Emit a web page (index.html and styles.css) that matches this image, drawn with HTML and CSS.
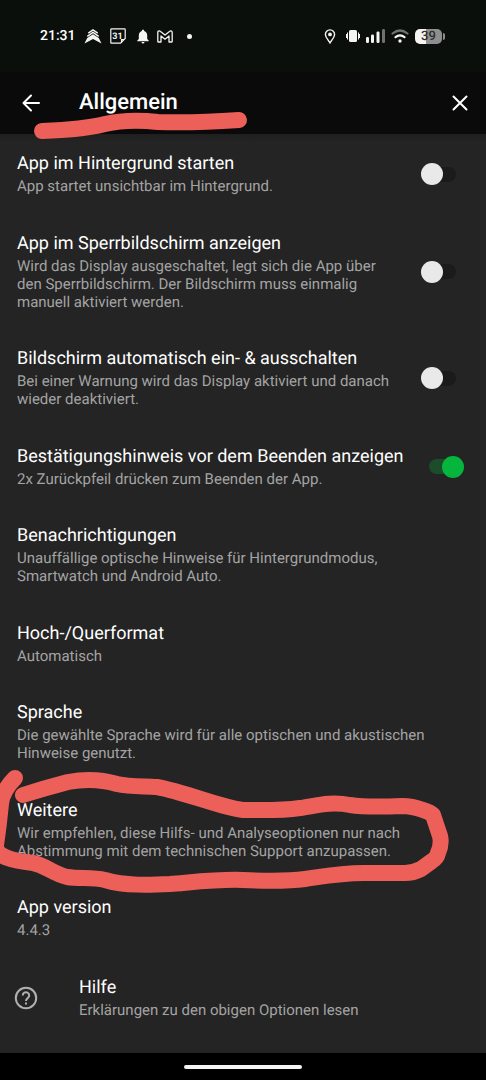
FILE: index.html
```html
<!DOCTYPE html>
<html lang="de">
<head>
<meta charset="utf-8">
<meta name="viewport" content="width=device-width, initial-scale=1">
<title>Allgemein</title>
<link rel="stylesheet" href="styles.css">
</head>
<body>
<div class="screen">
  <div class="status">
    <div class="status-left">
      <span class="clock">21:31</span>
      <svg width="18" height="16" viewBox="0 0 18 16" fill="#f4f4f4"><path d="M9 6.300L14.800 10L17.500 15.500L9 11L.5 15.500L3.200 10Z"/><path d="M3.300 8.300L9 4.500L14.700 8.300M4.300 5.200L9 1.900L13.700 5.200" fill="none" stroke="#f4f4f4" stroke-width="1.500"/></svg>
      <svg width="16" height="16" viewBox="0 0 16 16"><path d="M1.500 .8H14.500Q15.200 .8 15.200 1.500V10.500L10.500 15.200H1.500Q.8 15.200 .8 14.500V1.500Q.8 .8 1.500 .8ZM15 11.500H11.500V15" fill="none" stroke="#f4f4f4" stroke-width="1.200"/><text x="7.500" y="11" class="cal-day">31</text></svg>
      <svg class="bell" width="12" height="15" viewBox="0 0 12 15" fill="#f4f4f4"><path d="M6 .5Q7.200 .5 7.200 2Q10.200 3 10.200 6.500V10L11.700 11.500V12.300H.3V11.500L1.800 10V6.500Q1.800 3 4.800 2Q4.800 .5 6 .5ZM4.500 13H7.500Q7.300 14.500 6 14.500Q4.700 14.500 4.500 13Z"/></svg>
      <svg width="16" height="13" viewBox="0 0 16 13" fill="none" stroke="#f4f4f4" stroke-width="1.300" stroke-linejoin="round"><path d="M.8 11.500V2.500Q.8 .8 2.200 .8Q2.800 .8 3.500 1.400L8 5L12.500 1.400Q13.200 .8 13.800 .8Q15.200 .8 15.200 2.500V11.500Q15.200 12 14.700 12H12V6L8 9.200L4 6V12H1.300Q.8 12 .8 11.500Z"/></svg>
      <span class="more-dot"></span>
    </div>
    <div class="status-right">
      <svg width="12" height="15" viewBox="0 0 12 15"><path d="M6 .9A4.500 4.500 0 0 1 10.600 5.500C10.600 8.300 8 10.500 6 13.900C4 10.500 1.400 8.300 1.400 5.500A4.500 4.500 0 0 1 6 .9Z" fill="none" stroke="#f4f4f4" stroke-width="1.400"/><circle cx="6" cy="5.400" r="1.900" fill="#f4f4f4"/></svg>
      <svg class="vibrate" width="14" height="12" viewBox="0 0 14 12" fill="#f4f4f4"><rect x="3" y="0" width="8" height="12" rx="1.500"/><rect x="1" y="2.500" width="1" height="7"/><rect x="12" y="2.500" width="1" height="7"/><rect x="0" y="4" width="1" height="4"/><rect x="13" y="4" width="1" height="4"/></svg>
      <svg width="19" height="14" viewBox="0 0 19 14" fill="#f4f4f4"><rect x="0" y="8" width="3" height="6" rx="1.300"/><rect x="5" y="5.500" width="3" height="8.500" rx="1.300"/><rect x="10.500" y="2.500" width="3" height="11.500" rx="1.300"/><rect x="16" y="0" width="3" height="14" rx="1.300" fill="#6f7270"/></svg>
      <svg width="18" height="14" viewBox="0 0 18 14" fill="none" stroke-linecap="round" stroke-width="2.200"><path d="M1.500 4.500Q9-1.500 16.500 4.500" stroke="#6f7270"/><path d="M4.500 8.200Q9 4.600 13.500 8.200" stroke="#f4f4f4"/><circle cx="9" cy="12" r="1.700" fill="#f4f4f4"/></svg>
      <div class="battery"><span class="battery-body">39</span><span class="battery-tip"></span></div>
    </div>
  </div>

  <header class="appbar">
    <button class="icon-button" type="button" aria-label="Zurück"><svg width="20" height="20" viewBox="0 0 20 20" fill="none" stroke="#fff" stroke-width="2" stroke-linecap="round" stroke-linejoin="round"><path d="M18 10H2.500M10 2.500L2.500 10L10 17.500"/></svg></button>
    <h1 class="appbar-title">Allgemein</h1>
    <button class="icon-button" type="button" aria-label="Schließen"><svg width="16" height="16" viewBox="0 0 16 16" fill="none" stroke="#fff" stroke-width="2" stroke-linecap="round"><path d="M1.500 1.500L14.500 14.500M14.500 1.500L1.500 14.500"/></svg></button>
  </header>

  <main class="settings">
    <label class="item" for="background">
      <span class="copy"><span class="title">App im Hintergrund starten</span><span class="detail">App startet unsichtbar im Hintergrund.</span></span>
      <input class="switch" type="checkbox" role="switch" id="background">
    </label>
    <label class="item" for="lockscreen">
      <span class="copy"><span class="title">App im Sperrbildschirm anzeigen</span><span class="detail">Wird das Display ausgeschaltet, legt sich die App über den Sperrbildschirm. Der Bildschirm muss einmalig manuell aktiviert werden.</span></span>
      <input class="switch" type="checkbox" role="switch" id="lockscreen">
    </label>
    <label class="item" for="autoscreen">
      <span class="copy"><span class="title">Bildschirm automatisch ein- &amp; ausschalten</span><span class="detail">Bei einer Warnung wird das Display aktiviert und danach wieder deaktiviert.</span></span>
      <input class="switch" type="checkbox" role="switch" id="autoscreen">
    </label>
    <label class="item item-wide" for="confirm">
      <span class="copy"><span class="title">Bestätigungshinweis vor dem Beenden anzeigen</span><span class="detail">2x Zurückpfeil drücken zum Beenden der App.</span></span>
      <input class="switch" type="checkbox" role="switch" id="confirm" checked>
    </label>
    <a class="item" href="#benachrichtigungen"><span class="copy"><span class="title">Benachrichtigungen</span><span class="detail">Unauffällige optische Hinweise für Hintergrundmodus, Smartwatch und Android Auto.</span></span></a>
    <a class="item" href="#format"><span class="copy"><span class="title">Hoch-/Querformat</span><span class="detail">Automatisch</span></span></a>
    <a class="item" href="#sprache"><span class="copy"><span class="title">Sprache</span><span class="detail">Die gewählte Sprache wird für alle optischen und akustischen Hinweise genutzt.</span></span></a>
    <a class="item" href="#weitere"><span class="copy"><span class="title">Weitere</span><span class="detail">Wir empfehlen, diese Hilfs- und Analyseoptionen nur nach Abstimmung mit dem technischen Support anzupassen.</span></span></a>
    <div class="item"><span class="copy"><span class="title">App version</span><span class="detail">4.4.3</span></span></div>
    <a class="item item-help" href="#hilfe">
      <svg width="24" height="24" viewBox="0 0 24 24" fill="none" stroke="#b0b0b0" stroke-width="2"><circle cx="12" cy="12" r="10.200"/><path d="M8.800 9.500A3.200 3.200 0 1 1 13.700 12.100Q12 13.200 12 15"/><path d="M12 16.500V18.500"/></svg>
      <span class="copy"><span class="title">Hilfe</span><span class="detail">Erklärungen zu den obigen Optionen lesen</span></span>
    </a>
  </main>

  <div class="navbar"><span class="nav-handle"></span></div>

  <svg class="marker" width="486" height="1080" viewBox="0 0 486 1080" aria-hidden="true">
    <path d="M42 131C65 130 85 129 105 124C122 120 140 120 158 122C185 123 210 122 239 120"/>
    <path d="M15 778Q2 791 1 804Q-1 825 -4 845C-6 857 15 861 33 863C45 865 53 874 67 877C80 879 92 877 105 880C125 886 150 885 170 884C195 882 220 879 243 880C265 881 290 881 305 879C325 876 345 872 370 873H405Q413 873 421 869L432 861Q437 858 438 853Q442 844 440 836L436 824L433 815Q430 812 423 810Q412 806 402 806C380 807 363 807 350 805C330 801 315 806 300 808C280 811 260 810 243 810C222 808 185 792 157 787C145 786 130 787 117 784C100 779 84 779 68 782Q45 788 23 795"/>
  </svg>
</div>
</body>
</html>
```

FILE: styles.css
```css
* { box-sizing: border-box; }

body {
  margin: 0;
  background: #242424;
  color: #fff;
  font-family: Roboto, "Noto Sans", sans-serif;
  text-rendering: geometricPrecision;
}

svg { display: block; flex: none; }

.screen {
  position: relative;
  display: flex;
  flex-direction: column;
  min-height: 100vh;
  overflow: hidden;
}

.status {
  display: flex;
  align-items: center;
  justify-content: space-between;
  height: 72px;
  padding: 0 41px 0 40px;
  background: #0a0f0b;
}

.status-left {
  display: flex;
  align-items: center;
  gap: 8px;
}

.status-right {
  display: flex;
  align-items: center;
  gap: 6px;
}

.clock {
  font-size: 14px;
  font-weight: 500;
  line-height: 20px;
}

.cal-day {
  fill: #f4f4f4;
  font-size: 9px;
  font-weight: 700;
  text-anchor: middle;
}

.bell { margin-left: 3px; }

.more-dot {
  width: 5px;
  height: 5px;
  margin-left: 6px;
  border-radius: 50%;
  background: #f4f4f4;
}

.vibrate { margin-left: 4px; }

.battery {
  display: flex;
  align-items: center;
  gap: 1px;
}

.battery-body {
  width: 27px;
  border-radius: 5px;
  background: linear-gradient(90deg, #f4f4f4 42%, #8d8f8e 42%);
  color: #2c2e2c;
  font-size: 13px;
  font-weight: 500;
  line-height: 15px;
  text-align: center;
}

.battery-tip {
  width: 2px;
  height: 7px;
  border-radius: 0 2px 2px 0;
  background: #8d8f8e;
}

.appbar {
  display: flex;
  align-items: center;
  height: 62px;
  padding: 0 18px 0 21px;
  background: #0a0a0a;
}

.icon-button {
  padding: 0;
  border: 0;
  background: none;
}

.appbar-title {
  flex: 1;
  margin: 0;
  padding-left: 38px;
  font-size: 22px;
  font-weight: 500;
  line-height: 28px;
}

.settings {
  flex: 1;
  display: flex;
  flex-direction: column;
  justify-content: space-between;
  gap: 16px;
  padding: 19px 0 34px;
  background: linear-gradient(#1f1f1f, #242424 8px);
}

.item {
  display: flex;
  align-items: center;
  justify-content: space-between;
  gap: 22px;
  padding: 0 30px 0 17px;
  color: inherit;
  text-decoration: none;
}

.item-wide { padding-right: 22px; }

.item-help {
  justify-content: flex-start;
  gap: 41px;
  padding-left: 14px;
}

.copy {
  display: flex;
  flex-direction: column;
  gap: 2px;
}

.title {
  font-size: 18px;
  line-height: 22px;
}

.detail {
  color: #a3a3a3;
  font-size: 15px;
  line-height: 18px;
}

.switch {
  appearance: none;
  display: grid;
  flex: none;
  align-items: center;
  width: 35px;
  height: 22px;
  margin: 0;
}

.switch::before,
.switch::after {
  content: "";
  grid-area: 1 / 1;
}

.switch::before {
  justify-self: end;
  width: 28px;
  height: 15px;
  border-radius: 8px;
  background: #1b1b1b;
}

.switch::after {
  width: 22px;
  height: 22px;
  border-radius: 50%;
  background: #e9e9e9;
}

.switch:checked::before {
  justify-self: start;
  background: #1c4d2a;
}

.switch:checked::after {
  justify-self: end;
  background: #05b53c;
}

.navbar {
  display: flex;
  align-items: center;
  justify-content: center;
  height: 27px;
  background: #000;
}

.nav-handle {
  width: 118px;
  height: 4px;
  border-radius: 2px;
  background: #f4f4f4;
}

.marker {
  position: absolute;
  top: 0;
  left: 0;
  fill: none;
  stroke: #ec6059;
  stroke-width: 16px;
  stroke-linecap: round;
  stroke-linejoin: round;
  pointer-events: none;
}
```
